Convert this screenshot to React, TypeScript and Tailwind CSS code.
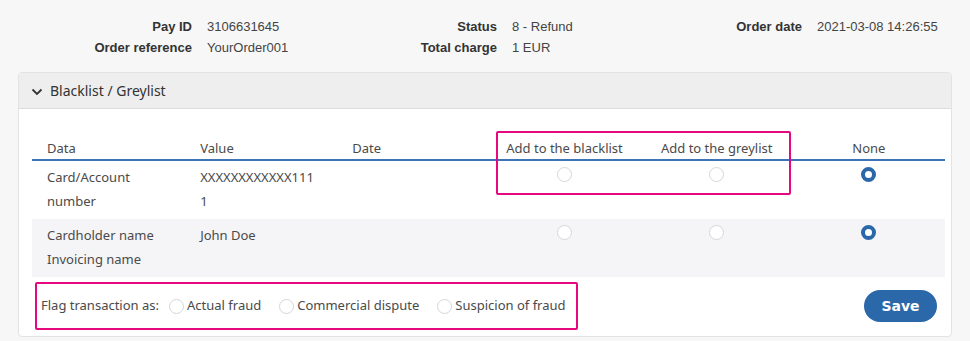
import React from "react";

const info = [
    [["Pay ID", "3106631645"], ["Order reference", "YourOrder001"]],
    [["Status", "8 - Refund"], ["Total charge", "1 EUR"]],
    [["Order date", "2021-03-08 14:26:55"]],
];

const rows = [
    { data: ["Card/Account", "number"], value: ["XXXXXXXXXXXX111", "1"], alt: false },
    { data: ["Cardholder name", "Invoicing name"], value: ["John Doe"], alt: true },
];

function Radio({ checked = false }: { checked?: boolean }) {
    return checked ? (
        <span className="inline-block w-[15px] h-[15px] rounded-full border-[4px] border-[#2b68aa] bg-white" />
    ) : (
        <span className="inline-block w-[15px] h-[15px] rounded-full border border-[#d4d6da] bg-white" />
    );
}

export default function App() {
    return (
        <div className="w-[970px] h-[341px] overflow-hidden bg-[#f7f7f7]">
            {/* Transaction summary */}
            <div className="flex pt-[16px] font-['Liberation_Sans',Arial,sans-serif] text-[13px] leading-[21px] whitespace-nowrap">
                {info.map((group, i) => (
                    <div key={i} className="w-[305px] grid grid-cols-[192px_1fr] gap-x-[15px]">
                        {group.map(([label, value]) => (
                            <React.Fragment key={label}>
                                <div className="text-right font-bold text-[#333]">{label}</div>
                                <div className="text-[#444]">{value}</div>
                            </React.Fragment>
                        ))}
                    </div>
                ))}
            </div>

            {/* Blacklist panel */}
            <div className="relative ml-[18px] mt-[14px] w-[934px] h-[265px] bg-white border border-[#e3e3e3] rounded-[4px] overflow-hidden font-['Noto_Sans',sans-serif] text-[13px] text-[#4a4a4a]">
                <div className="h-[36px] flex items-center pl-[12px] gap-[7px] bg-[#eeeeee] border-b border-[#dcdcdc] text-[#333]">
                    <svg width="12" height="8" viewBox="0 0 12 8" className="mt-[2px]">
                        <polyline points="1.5,1.5 6,6 10.5,1.5" fill="none" stroke="#333" strokeWidth="1.8" />
                    </svg>
                    <span className="text-[14px]">Blacklist / Greylist</span>
                </div>

                <div className="pl-[13px] pr-[6px] pt-[28px]">
                    <table className="w-[913px] table-fixed border-collapse">
                        <thead>
                            <tr className="border-b-2 border-[#3d74b5] leading-[22px]">
                                <th className="font-normal text-left pl-[15px]">Data</th>
                                <th className="font-normal text-left pl-[16px]">Value</th>
                                <th className="font-normal text-left pl-[16px]">Date</th>
                                <th className="font-normal text-center">Add to the blacklist</th>
                                <th className="font-normal text-center">Add to the greylist</th>
                                <th className="font-normal text-center">None</th>
                            </tr>
                        </thead>
                        <tbody>
                            {rows.map((row, i) => (
                                <tr key={i} className={row.alt ? "bg-[#f5f5f7]" : "bg-white"}>
                                    <td className="align-top pl-[15px] pt-[4px] pb-[6px] leading-[24px] h-[58px]">
                                        {row.data.map((d) => <div key={d}>{d}</div>)}
                                    </td>
                                    <td className="align-top pl-[16px] pt-[4px] pb-[6px] leading-[24px]">
                                        {row.value.map((v) => <div key={v}>{v}</div>)}
                                    </td>
                                    <td />
                                    <td className="align-top text-center pt-[6px]"><Radio /></td>
                                    <td className="align-top text-center pt-[6px]"><Radio /></td>
                                    <td className="align-top text-center pt-[6px]"><Radio checked /></td>
                                </tr>
                            ))}
                        </tbody>
                    </table>

                    <div className="flex items-center justify-between mt-[5px] pl-[3px] pr-[8px]">
                        <div className="flex items-center h-[48px] pl-[4px] pr-[10px] border-2 border-[#e5087e] rounded-[2px]">
                            <span className="mr-[10px]">Flag transaction as:</span>
                            {["Actual fraud", "Commercial dispute", "Suspicion of fraud"].map((f) => (
                                <label key={f} className="flex items-center gap-[3px] mr-[18px] last:mr-0">
                                    <Radio />
                                    <span>{f}</span>
                                </label>
                            ))}
                        </div>
                        <button className="w-[73px] h-[32px] rounded-full bg-[#2b68aa] text-white font-bold text-[14px] font-['DejaVu_Sans',sans-serif]">
                            Save
                        </button>
                    </div>
                </div>

                {/* highlight around list choices */}
                <div className="absolute left-[477px] top-[58px] w-[295px] h-[64px] border-2 border-[#e5087e] rounded-[2px] pointer-events-none" />
            </div>
        </div>
    );
}
